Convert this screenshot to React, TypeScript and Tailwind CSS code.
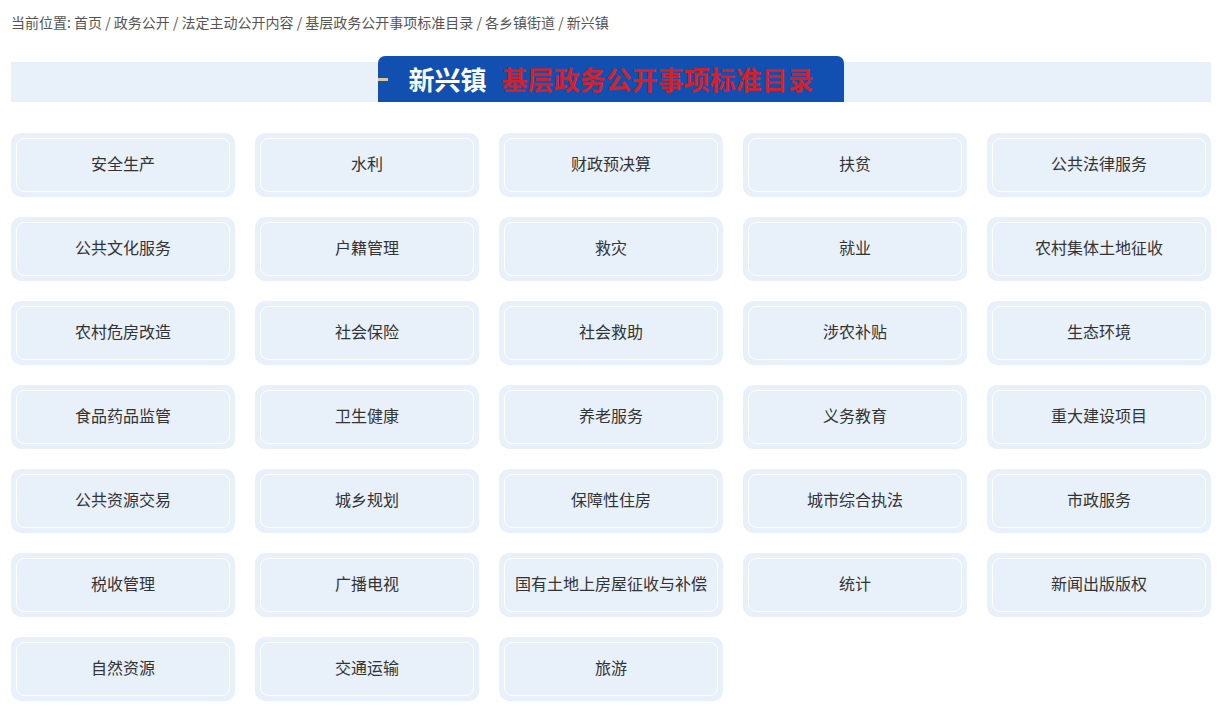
import React from 'react';

const items = [
  '安全生产', '水利', '财政预决算', '扶贫', '公共法律服务',
  '公共文化服务', '户籍管理', '救灾', '就业', '农村集体土地征收',
  '农村危房改造', '社会保险', '社会救助', '涉农补贴', '生态环境',
  '食品药品监管', '卫生健康', '养老服务', '义务教育', '重大建设项目',
  '公共资源交易', '城乡规划', '保障性住房', '城市综合执法', '市政服务',
  '税收管理', '广播电视', '国有土地上房屋征收与补偿', '统计', '新闻出版版权',
  '自然资源', '交通运输', '旅游',
];

const App: React.FC = () => {
  return (
    <div className="w-[1223px] min-h-[708px] bg-white px-[11px] pt-[13px] font-['Noto_Sans_CJK_SC','Microsoft_YaHei',sans-serif]">
      {/* breadcrumb */}
      <div className="text-[14px] leading-[18px] text-[#555]">
        当前位置: 首页 / 政务公开 / 法定主动公开内容 / 基层政务公开事项标准目录 / 各乡镇街道 / 新兴镇
      </div>

      {/* title bar */}
      <div className="mt-[25px] h-[46px] w-[1200px] flex justify-center bg-[linear-gradient(to_bottom,transparent_6px,#e8f0fa_6px)]">
        <div className="h-full flex items-center bg-[#1150b0] rounded-t-[7px] pr-[30px]">
          <span className="w-[10px] h-[3px] bg-[#d8c89a]"></span>
          <span className="ml-[20px] text-white text-[26px] font-bold leading-none">新兴镇</span>
          <span className="ml-[15px] text-[#d3212c] text-[26px] font-bold leading-none">基层政务公开事项标准目录</span>
        </div>
      </div>

      {/* items */}
      <div className="mt-[31px] w-[1200px] grid grid-cols-5 gap-5 pb-2">
        {items.map((t) => (
          <div key={t} className="h-16 rounded-[10px] bg-[#e8f0fa] p-[5px]">
            <div className="h-full pb-[4px] rounded-[8px] border border-white flex items-center justify-center text-[16px] text-[#333]">
              {t}
            </div>
          </div>
        ))}
      </div>
    </div>
  );
};

export default App;
